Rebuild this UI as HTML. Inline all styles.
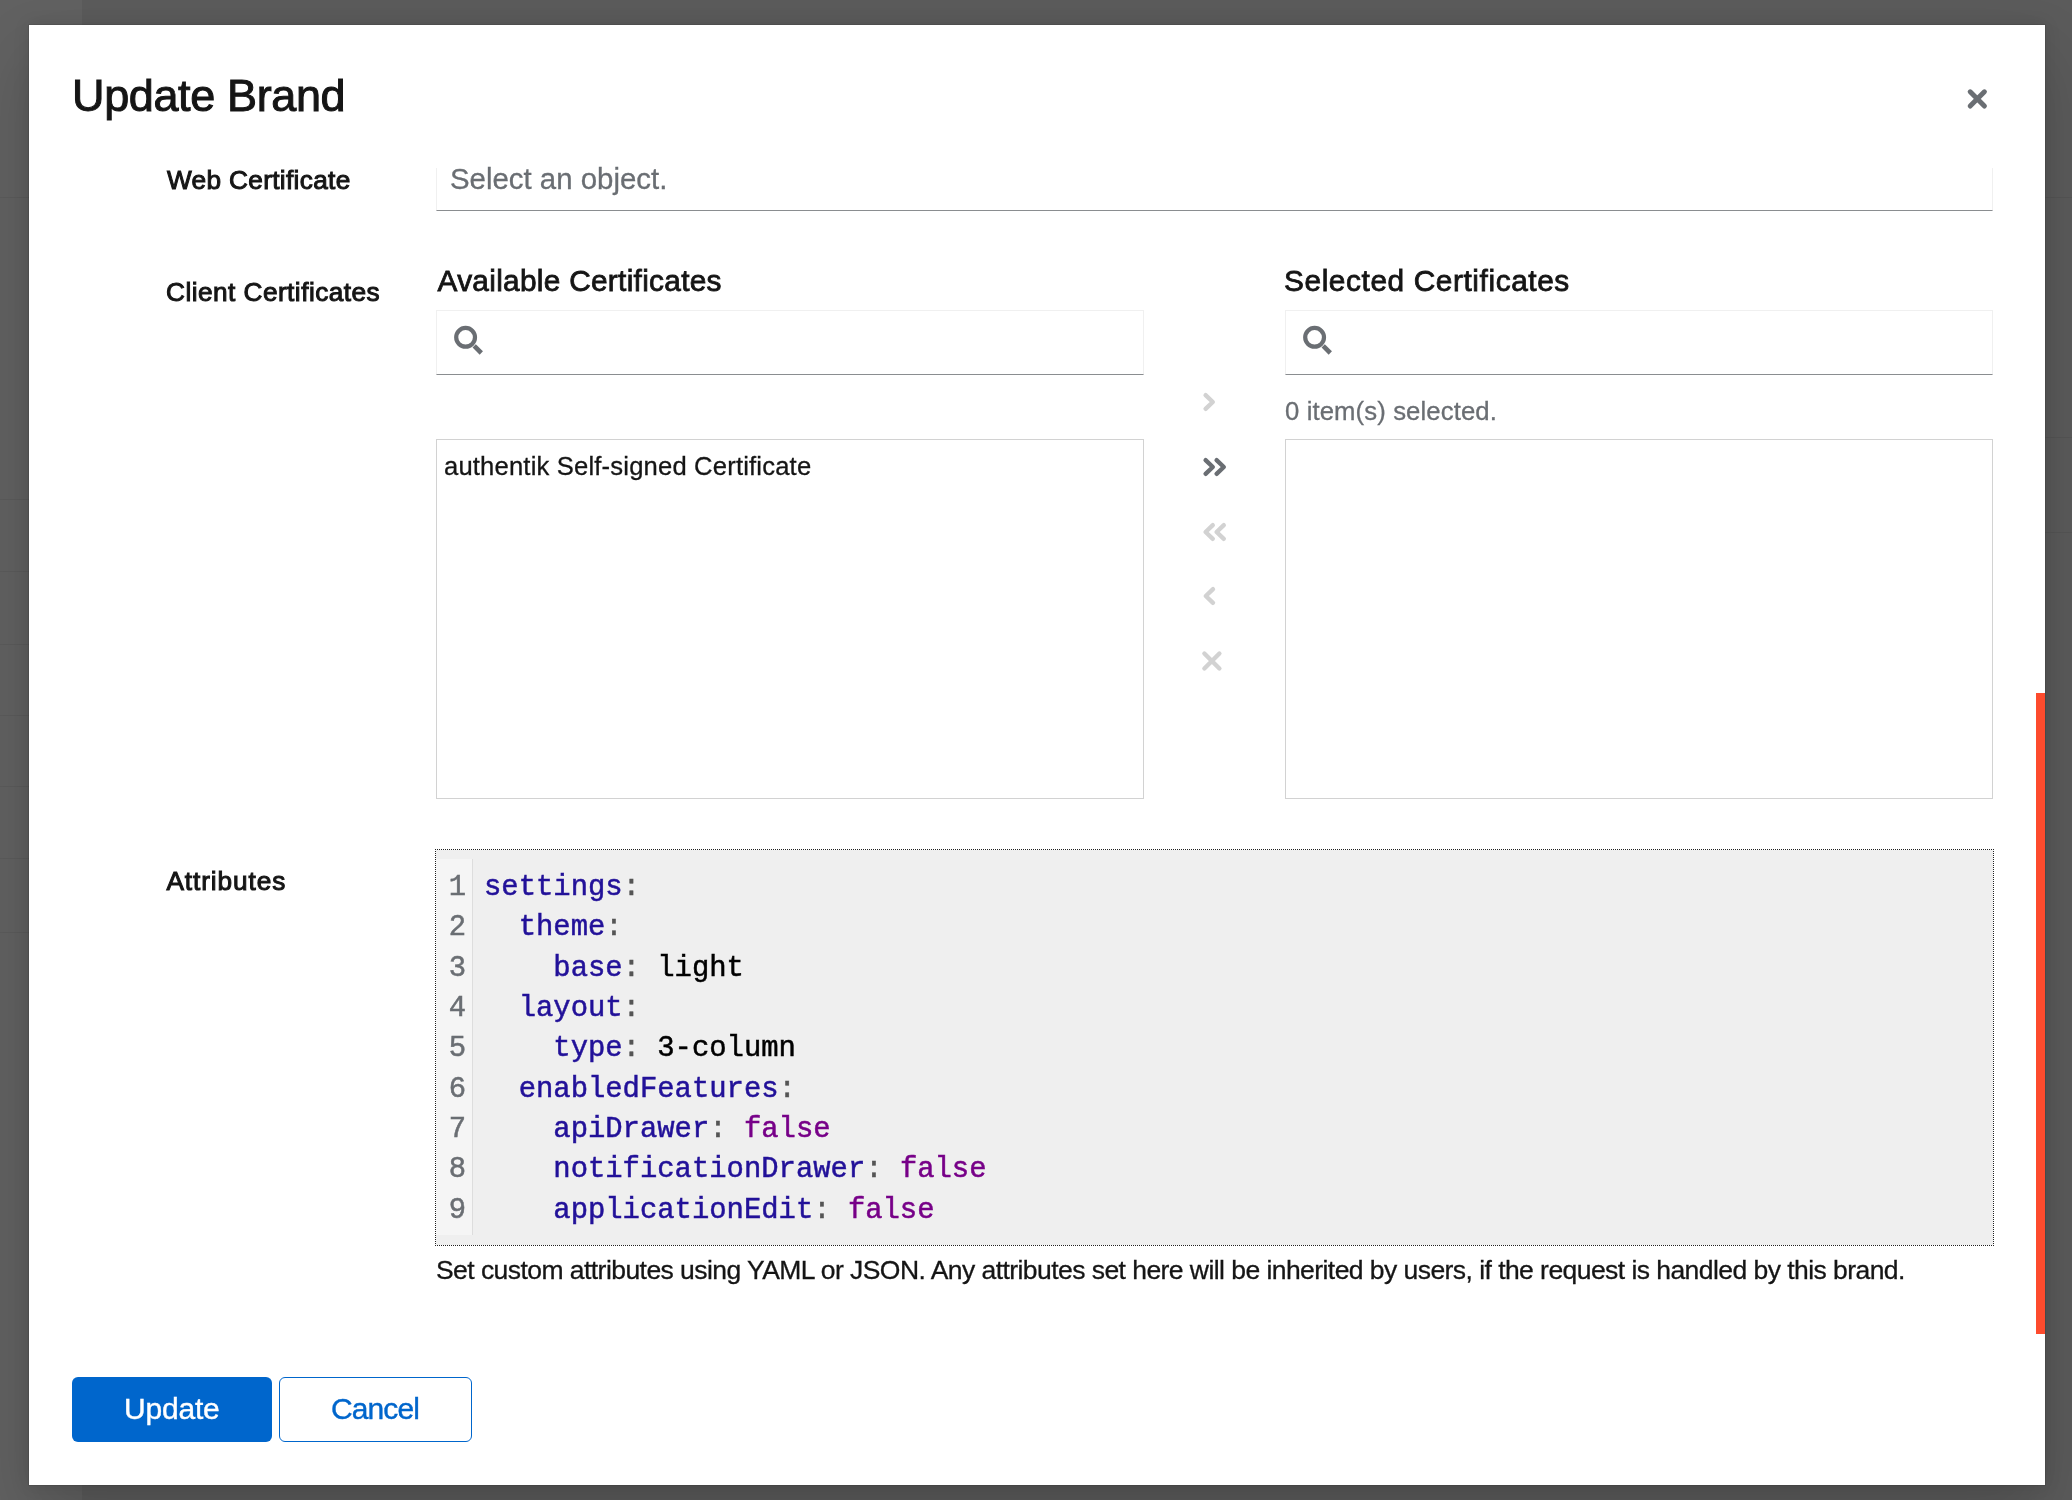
<!DOCTYPE html>
<html>
<head>
<meta charset="utf-8">
<style>
html,body{margin:0;padding:0;}
body{width:2072px;height:1500px;overflow:hidden;position:relative;background:#5b5b5b;font-family:"Liberation Sans",sans-serif;color:#151515;}
.a{position:absolute;white-space:nowrap;}
.bgl{position:absolute;height:1px;background:rgba(0,0,0,0.06);}
#modal{position:absolute;left:29px;top:25px;width:2016px;height:1460px;background:#fff;overflow:hidden;box-shadow:0 32px 64px rgba(3,3,3,0.16),0 0 16px rgba(3,3,3,0.1),0 0 0 1px rgba(0,0,0,0.08);}
.t{position:absolute;white-space:nowrap;line-height:1;}
.lbl{font-weight:normal;font-size:26.2px;color:#151515;-webkit-text-stroke:1px #151515;}
.box{position:absolute;box-sizing:border-box;}
.code{position:absolute;font-family:"Liberation Mono",monospace;font-size:28.88px;line-height:40.32px;white-space:pre;color:#000;-webkit-text-stroke-width:0.5px;}
.k{color:#221199;}
.p{color:#555555;}
.f{color:#770088;}
.ln{position:absolute;font-family:"Liberation Mono",monospace;font-size:28.88px;line-height:40.32px;color:#6a6e73;text-align:right;-webkit-text-stroke-width:0.5px;}
</style>
</head>
<body>
<!-- background page hints -->
<div class="a" style="left:0;top:0;width:82px;height:25px;background:#616161;"></div>
<div class="a" style="left:0;top:25px;width:82px;height:1475px;background:#616161;"></div>
<div class="bgl" style="left:0;top:197px;width:29px;"></div>
<div class="bgl" style="left:0;top:499px;width:29px;"></div>
<div class="bgl" style="left:0;top:571px;width:29px;"></div>
<div class="bgl" style="left:0;top:644px;width:29px;"></div>
<div class="bgl" style="left:0;top:715px;width:29px;"></div>
<div class="bgl" style="left:0;top:786px;width:29px;"></div>
<div class="bgl" style="left:0;top:858px;width:29px;"></div>
<div class="bgl" style="left:0;top:932px;width:29px;"></div>
<div class="bgl" style="left:2045px;top:197px;width:27px;"></div>
<div class="bgl" style="left:2045px;top:437px;width:27px;"></div>
<div class="bgl" style="left:2045px;top:532px;width:27px;"></div>

<div id="modal">
</div>

<!-- everything positioned in page coordinates -->
<div id="content" style="position:absolute;left:0;top:0;width:2072px;height:1500px;will-change:transform;">
  <!-- title -->
  <div class="t" style="left:72px;top:72.9px;font-size:45px;letter-spacing:-0.37px;color:#151515;-webkit-text-stroke:1px #151515;">Update Brand</div>
  <!-- close -->
  <svg class="a" style="left:1960px;top:82px" width="34" height="34" viewBox="1960 82 34 34">
    <path d="M1970.2 91.8 L1984.4 106 M1984.4 91.8 L1970.2 106" stroke="#6a6e73" stroke-width="5" stroke-linecap="round" fill="none"/>
  </svg>

  <!-- Web certificate -->
  <div class="t lbl" style="left:167px;top:167.3px;letter-spacing:0.34px;">Web Certificate</div>
  <div class="box" style="left:436px;top:168px;width:1557px;height:43px;border-left:1px solid #f0f0f0;border-right:1px solid #f0f0f0;border-bottom:1px solid #8a8d90;"></div>
  <div class="t" style="left:450px;top:164.1px;font-size:29.4px;letter-spacing:0px;color:#6a6e73;-webkit-text-stroke-width:0.3px;">Select an object.</div>

  <!-- Client certs -->
  <div class="t lbl" style="left:166px;top:278.8px;letter-spacing:0.47px;">Client Certificates</div>
  <div class="t" style="left:437.5px;top:266.2px;font-size:29.8px;-webkit-text-stroke:0.8px #151515;letter-spacing:0.3px;">Available Certificates</div>
  <div class="t" style="left:1284px;top:266.2px;font-size:29.8px;-webkit-text-stroke:0.8px #151515;letter-spacing:0.6px;">Selected Certificates</div>

  <div class="box" style="left:436px;top:310px;width:708px;height:65px;border:1px solid #f0f0f0;border-bottom-color:#8a8d90;"></div>
  <div class="box" style="left:1285px;top:310px;width:708px;height:65px;border:1px solid #f0f0f0;border-bottom-color:#8a8d90;"></div>
  <svg class="a" style="left:450px;top:322px" width="40" height="40" viewBox="450 322 40 40">
    <circle cx="465.6" cy="337.3" r="9.4" stroke="#6a6e73" stroke-width="4.2" fill="none"/>
    <path d="M474.2 345.9 L481.3 353" stroke="#6a6e73" stroke-width="4.6" stroke-linecap="butt" fill="none"/>
  </svg>
  <svg class="a" style="left:1299px;top:322px" width="40" height="40" viewBox="450 322 40 40">
    <circle cx="465.6" cy="337.3" r="9.4" stroke="#6a6e73" stroke-width="4.2" fill="none"/>
    <path d="M474.2 345.9 L481.3 353" stroke="#6a6e73" stroke-width="4.6" stroke-linecap="butt" fill="none"/>
  </svg>

  <div class="t" style="left:1285px;top:399px;font-size:25.7px;letter-spacing:0.11px;color:#6a6e73;-webkit-text-stroke-width:0.3px;">0 item(s) selected.</div>

  <div class="box" style="left:436px;top:439px;width:708px;height:360px;border:1px solid #d2d2d2;"></div>
  <div class="box" style="left:1285px;top:439px;width:708px;height:360px;border:1px solid #d2d2d2;"></div>
  <div class="t" style="left:444px;top:454px;font-size:25.6px;letter-spacing:0.18px;-webkit-text-stroke-width:0.3px;">authentik Self-signed Certificate</div>

  <!-- transfer controls -->
  <svg class="a" style="left:1190px;top:380px" width="50" height="310" viewBox="1190 380 50 310">
    <g fill="none" stroke-width="4.4" stroke-linecap="round" stroke-linejoin="round">
      <path d="M1205.6 395.2 L1212.8 402 L1205.6 408.8" stroke="#d2d2d2"/>
      <path d="M1205.6 460.2 L1212.8 467 L1205.6 473.8 M1216.6 460.2 L1223.8 467 L1216.6 473.8" stroke="#6a6e73"/>
      <path d="M1212.8 525.2 L1205.6 532 L1212.8 538.8 M1223.8 525.2 L1216.6 532 L1223.8 538.8" stroke="#d2d2d2"/>
      <path d="M1213 589.2 L1205.8 596 L1213 602.8" stroke="#d2d2d2"/>
      <path d="M1204.4 653.5 L1219.4 668.5 M1219.4 653.5 L1204.4 668.5" stroke="#d2d2d2"/>
    </g>
  </svg>

  <!-- Attributes -->
  <div class="t lbl" style="left:166.5px;top:868.2px;letter-spacing:0.9px;">Attributes</div>
  <div class="box" style="left:436px;top:850px;width:1557px;height:395px;background:#efefef;outline:1px dotted #212121;"></div>
  <div class="box" style="left:436px;top:859px;width:37px;height:376px;background:#f5f5f5;border-right:1px solid #dddddd;"></div>
  <div class="ln" style="left:436px;top:868.16px;width:30px;">1<br>2<br>3<br>4<br>5<br>6<br>7<br>8<br>9</div>
  <div class="code" style="left:484px;top:868.16px;"><span class="k">settings</span><span class="p">:</span>
  <span class="k">theme</span><span class="p">:</span>
    <span class="k">base</span><span class="p">:</span> light
  <span class="k">layout</span><span class="p">:</span>
    <span class="k">type</span><span class="p">:</span> 3-column
  <span class="k">enabledFeatures</span><span class="p">:</span>
    <span class="k">apiDrawer</span><span class="p">:</span> <span class="f">false</span>
    <span class="k">notificationDrawer</span><span class="p">:</span> <span class="f">false</span>
    <span class="k">applicationEdit</span><span class="p">:</span> <span class="f">false</span></div>

  <div class="t" style="left:436px;top:1257.2px;font-size:26.5px;letter-spacing:-0.555px;-webkit-text-stroke-width:0.3px;">Set custom attributes using YAML or JSON. Any attributes set here will be inherited by users, if the request is handled by this brand.</div>

  <!-- orange scrollbar -->
  <div class="a" style="left:2036px;top:693px;width:9px;height:641px;background:#fd4b2d;"></div>

  <!-- buttons -->
  <div class="box" style="left:72px;top:1377px;width:200px;height:65px;background:#0066cc;border-radius:6px;"></div>
  <div class="t" style="left:124px;top:1393.6px;font-size:30px;letter-spacing:-0.2px;color:#fff;-webkit-text-stroke-width:0.4px;">Update</div>
  <div class="box" style="left:279px;top:1377px;width:193px;height:65px;border:1px solid #0066cc;border-radius:6px;"></div>
  <div class="t" style="left:331px;top:1393.6px;font-size:30px;letter-spacing:-0.9px;color:#0066cc;-webkit-text-stroke-width:0.4px;">Cancel</div>
</div>
</body>
</html>
